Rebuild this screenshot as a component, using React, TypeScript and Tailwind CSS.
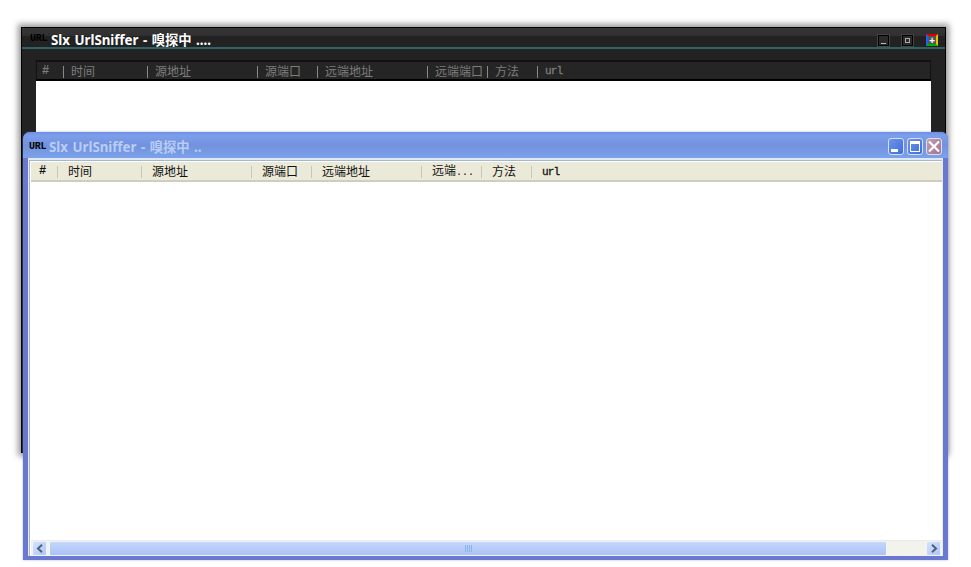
import React from "react";

const widths = ["w-[27px]", "w-[84px]", "w-[110px]", "w-[60px]", "w-[110px]", "w-[60px]", "w-[50px]", "w-[60px]"];

const cjk = "font-['SimSun','Noto_Sans_CJK_SC',sans-serif]";

function Label({ text }: { text: string }) {
  if (text === "url") {
    return <span className="mt-[2px] font-['Liberation_Mono',monospace] text-[11px] tracking-[-0.9px] [-webkit-text-stroke:0.3px_currentColor]">url</span>;
  }
  if (text === "#") {
    return <span className="font-['Liberation_Mono',monospace] font-bold">#</span>;
  }
  if (text.endsWith("...")) {
    return (
      <span>
        {text.slice(0, -3)}
        <span className="font-['Liberation_Mono',monospace] text-[10px]">...</span>
      </span>
    );
  }
  return <>{text}</>;
}

function Header({ labels, dark }: { labels: string[]; dark: boolean }) {
  return (
    <div className={`flex h-full items-center text-[12px] leading-none ${cjk} ${dark ? "text-[#7d7d7d]" : "text-[#111]"}`}>
      {labels.map((l, i) => (
        <div
          key={i}
          className={`${widths[i]} ${
            i === 0 ? (dark ? "pl-[5px]" : "pl-[8px]") : dark ? "pl-[7px]" : "pl-[10px]"
          } relative flex h-full shrink-0 items-center whitespace-nowrap`}
        >
          <Label text={l} />
          {i < 7 && (
            <span className={`absolute right-0 top-[4px] h-[12px] w-px ${dark ? "bg-[#8a8a8a]" : "bg-[#c9c7b8]"}`} />
          )}
        </div>
      ))}
    </div>
  );
}

function XpButton({ kind }: { kind: "min" | "max" | "close" }) {
  const bg =
    kind === "close"
      ? "bg-gradient-to-br from-[#c0a0b4] to-[#a8708c]"
      : "bg-gradient-to-br from-[#6f93e6] to-[#3d6ee0]";
  return (
    <div className={`relative h-[17px] w-[16px] rounded-[3px] border border-[#d5e0f8] ${bg}`}>
      {kind === "min" && <span className="absolute bottom-[2px] left-[2px] h-[3px] w-[7px] bg-white" />}
      {kind === "max" && <span className="absolute inset-x-[2px] bottom-[2px] top-[2px] border border-t-[3px] border-white" />}
      {kind === "close" && (
        <svg viewBox="0 0 14 15" className="absolute inset-0 h-full w-full">
          <path d="M2 2.5 L12 12.5 M12 2.5 L2 12.5" stroke="#fff" strokeWidth="2.2" />
        </svg>
      )}
    </div>
  );
}

function Chevron({ dir }: { dir: "l" | "r" }) {
  return (
    <div className="flex h-[15px] w-[15px] shrink-0 items-center justify-center rounded-[2px] border border-[#eef3fd] bg-gradient-to-br from-[#d5e2fb] to-[#aec6f6]">
      <svg viewBox="0 0 8 9" className="h-[9px] w-[8px]">
        <path d={dir === "l" ? "M6 0.8 L2 4.5 L6 8.2" : "M2 0.8 L6 4.5 L2 8.2"} fill="none" stroke="#4d6185" strokeWidth="2" />
      </svg>
    </div>
  );
}

const titleFont = "font-['Noto_Sans','Noto_Sans_CJK_SC',sans-serif] text-[13.3px] font-bold leading-none [word-spacing:1px] whitespace-nowrap";
const urlIcon = "font-['Liberation_Mono',monospace] text-[10px] font-bold leading-none tracking-[-0.3px]";

export default function App() {
  return (
    <div className="relative h-[567px] w-[971px] overflow-hidden bg-white font-['Noto_Sans',sans-serif]">
      {/* back window */}
      <div className="absolute left-[21px] top-[27px] flex h-[426px] w-[925px] flex-col border border-black bg-[#222] shadow-[0_0_6px_3px_rgba(0,0,0,0.4)]">
        <div className="flex h-[19px] shrink-0 items-center bg-[linear-gradient(#363636_0,#303030_40%,#222_40%,#222_100%)] pl-[8px] pr-[7px]">
          <span className={`${urlIcon} mt-[2px] w-[21px] text-black`}>URL</span>
          <span className={`${titleFont} mt-[7px] text-white`}>Slx UrlSniffer - 嗅探中 ....</span>
          <div className="ml-auto mt-[5px] flex items-center">
            <div className="mr-[11px] flex h-[13px] w-[13px] items-end justify-center border border-[#444] bg-[#2a2a2a] pb-[2px] shadow-[inset_0_0_0_1px_#000]">
              <span className="h-px w-[5px] bg-[#bbb]" />
            </div>
            <div className="mr-[12px] flex h-[13px] w-[13px] items-center justify-center border border-[#444] bg-[#2a2a2a] shadow-[inset_0_0_0_1px_#000]">
              <span className="h-[5px] w-[5px] border border-[#aaa]" />
            </div>
            <div className="flex h-[12px] w-[12px] items-center justify-center border-2 border-b-[#00b000] border-l-[#2060ff] border-r-[#e8c000] border-t-[#e00000] bg-[#555] text-[10px] font-bold leading-none text-white">
              +
            </div>
          </div>
        </div>
        <div className="h-[2px] shrink-0 bg-[#2f6168]" />
        <div className="flex min-h-0 flex-1 flex-col px-[14px] pt-[11px]">
          <div className="h-[21px] shrink-0 border-x border-y-2 border-x-[#111] border-b-black border-t-[#111] bg-[#252525]">
            <Header dark labels={["#", "时间", "源地址", "源端口", "远端地址", "远端端口", "方法", "url"]} />
          </div>
          <div className="flex-1 bg-white" />
        </div>
      </div>

      {/* front window */}
      <div className="absolute left-[23px] top-[132px] flex h-[428px] w-[925px] flex-col rounded-t-[7px] bg-[#6b78d0] shadow-[0_0_2px_rgba(90,100,200,0.6)]">
        <div className="flex h-[26px] shrink-0 items-center rounded-t-[7px] bg-[linear-gradient(#6f8fe4_0,#7d9fea_14%,#7391de_50%,#7aa2ea_100%)] pl-[6px] pr-[6px]">
          <span className={`${urlIcon} mt-[3px] w-[20px] text-black`}>URL</span>
          <span className={`${titleFont} mt-[5px] text-[#b9cdf5]`}>Slx UrlSniffer - 嗅探中 ..</span>
          <div className="ml-auto mt-[3px] flex gap-[3px]">
            <XpButton kind="min" />
            <XpButton kind="max" />
            <XpButton kind="close" />
          </div>
        </div>
        <div className="flex min-h-0 flex-1 flex-col px-[5px] pb-[4px]">
          <div className="flex min-h-0 flex-1 flex-col border-l border-r border-t-2 border-[#e6eaf0] border-t-[#dfe8f8] bg-white">
            <div className="flex min-h-0 flex-1 flex-col border-l border-t border-[#a3b8c8] pl-px pt-px">
              <div className="h-[20px] shrink-0 border-b-2 border-[#cfcdbd] bg-[#ebe9d8]">
                <Header dark={false} labels={["#", "时间", "源地址", "源端口", "远端地址", "远端...", "方法", "url"]} />
              </div>
              <div className="flex-1 bg-white" />
              <div className="flex h-[16px] shrink-0 items-center gap-[2px] border-t border-[#ebebe4] bg-[#f3f3ee] px-[1px]">
                <Chevron dir="l" />
                <div className="flex h-[15px] w-[838px] items-center justify-center gap-px rounded-[2px] border border-[#eef3fd] bg-gradient-to-b from-[#c4d6fb] to-[#aac3f5]">
                  {[0, 1, 2, 3].map((i) => (
                    <span key={i} className="h-[7px] w-px bg-[#8fb0ee]" />
                  ))}
                </div>
                <div className="flex-1" />
                <Chevron dir="r" />
              </div>
            </div>
          </div>
        </div>
      </div>
    </div>
  );
}
